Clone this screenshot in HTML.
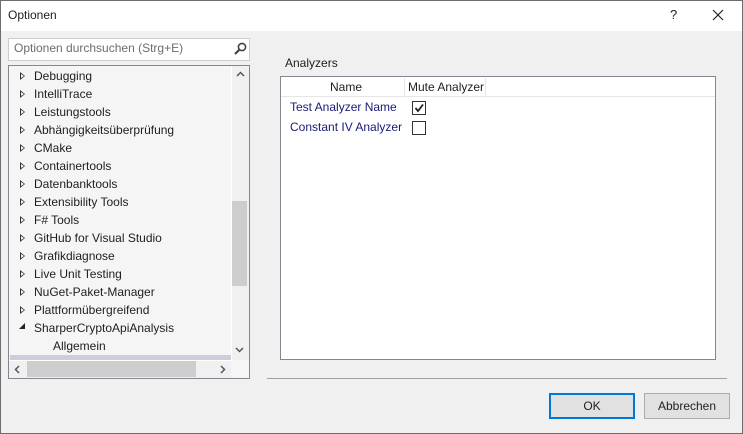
<!DOCTYPE html>
<html><head><style>
*{margin:0;padding:0;box-sizing:border-box}
body{width:743px;height:434px;overflow:hidden;font-family:"Segoe UI","Liberation Sans",sans-serif;font-size:12px;color:#1e1e1e;background:#f0f0f0;position:relative}
.a{position:absolute}
.win{left:0;top:0;width:743px;height:434px;border:1px solid #6d6d6d;background:#f0f0f0}
.title{left:1px;top:1px;width:741px;height:30px;background:#fff}
.item{position:absolute;left:34px;font-size:12px;line-height:18px;white-space:nowrap}
.tri{position:absolute;left:20px;width:0;height:0;border-top:4px solid transparent;border-bottom:4px solid transparent;border-left:5px solid #333}
.tri::after{content:"";position:absolute;left:-4px;top:-2px;border-top:2px solid transparent;border-bottom:2px solid transparent;border-left:3px solid #f5f5f5}
.btn{position:absolute;top:393px;width:86px;height:26px;background:#e1e1e1;border:1px solid #adadad;text-align:center;line-height:24px;font-size:12px}
.cb{position:absolute;left:412px;width:14px;height:14px;border:1px solid #333;background:#fff}
</style></head><body>
<div class="a win"></div>
<div class="a title"></div>
<div class="a" style="left:8px;top:8px;font-size:12px">Optionen</div>
<div class="a" style="left:670px;top:7px;font-size:13px">?</div>
<svg class="a" style="left:712px;top:9px" width="12" height="12"><path d="M1 1L11 11M11 1L1 11" stroke="#222" stroke-width="1.2"/></svg>

<div class="a" style="left:8px;top:38px;width:242px;height:23px;background:#fff;border:1px solid #ccc"></div>
<div class="a" style="left:14px;top:41px;color:#6d6d6d">Optionen durchsuchen (Strg+E)</div>
<svg class="a" style="left:233px;top:42px" width="14" height="14"><circle cx="9" cy="5" r="3.6" fill="none" stroke="#444" stroke-width="1.6"/><path d="M6.5 7.5L2 12" stroke="#444" stroke-width="2.2"/></svg>

<div class="a" style="left:8px;top:65px;width:242px;height:314px;background:#f5f5f5;border:1px solid #828790"></div>
<div class="a" style="left:231px;top:66px;width:18px;height:294px;background:#f0f0f0;border-left:1px solid #fff"></div>
<div class="a" style="left:232px;top:201px;width:15px;height:85px;background:#cdcdcd"></div>
<svg class="a" style="left:235px;top:347px" width="9" height="6"><path d="M1 1L4.5 4.5L8 1" fill="none" stroke="#555" stroke-width="1.5"/></svg>
<svg class="a" style="left:236px;top:71px" width="9" height="6"><path d="M1 5L4.5 1.5L8 5" fill="none" stroke="#555" stroke-width="1.5"/></svg>
<div class="a" style="left:9px;top:360px;width:222px;height:18px;background:#f0f0f0;border-top:1px solid #fff"></div>
<div class="a" style="left:27px;top:361px;width:169px;height:16px;background:#cdcdcd"></div>
<svg class="a" style="left:14px;top:365px" width="6" height="9"><path d="M5 1L1.5 4.5L5 8" fill="none" stroke="#555" stroke-width="1.5"/></svg>
<svg class="a" style="left:220px;top:365px" width="6" height="9"><path d="M1 1L4.5 4.5L1 8" fill="none" stroke="#555" stroke-width="1.5"/></svg>
<div class="a" style="left:10px;top:355px;width:221px;height:5px;background:#cccedb"></div>

<div class="tri" style="top:72px"></div><div class="item" style="top:67px">Debugging</div>
<div class="tri" style="top:90px"></div><div class="item" style="top:85px">IntelliTrace</div>
<div class="tri" style="top:108px"></div><div class="item" style="top:103px">Leistungstools</div>
<div class="tri" style="top:126px"></div><div class="item" style="top:121px">Abhängigkeitsüberprüfung</div>
<div class="tri" style="top:144px"></div><div class="item" style="top:139px">CMake</div>
<div class="tri" style="top:162px"></div><div class="item" style="top:157px">Containertools</div>
<div class="tri" style="top:180px"></div><div class="item" style="top:175px">Datenbanktools</div>
<div class="tri" style="top:198px"></div><div class="item" style="top:193px">Extensibility Tools</div>
<div class="tri" style="top:216px"></div><div class="item" style="top:211px">F# Tools</div>
<div class="tri" style="top:234px"></div><div class="item" style="top:229px">GitHub for Visual Studio</div>
<div class="tri" style="top:252px"></div><div class="item" style="top:247px">Grafikdiagnose</div>
<div class="tri" style="top:270px"></div><div class="item" style="top:265px">Live Unit Testing</div>
<div class="tri" style="top:288px"></div><div class="item" style="top:283px">NuGet-Paket-Manager</div>
<div class="tri" style="top:306px"></div><div class="item" style="top:301px">Plattformübergreifend</div>
<svg class="a" style="left:19px;top:323px" width="7" height="7"><path d="M6 0L6 6L0 6Z" fill="#222"/></svg>
<div class="item" style="top:319px">SharperCryptoApiAnalysis</div>
<div class="item" style="top:337px;left:53px">Allgemein</div>

<div class="a" style="left:285px;top:56px">Analyzers</div>
<div class="a" style="left:280px;top:76px;width:436px;height:284px;background:#fff;border:1px solid #828790"></div>
<div class="a" style="left:281px;top:96px;width:434px;height:1px;background:#e5e5e5"></div>
<div class="a" style="left:404px;top:78px;width:1px;height:18px;background:#e5e5e5"></div>
<div class="a" style="left:485px;top:78px;width:1px;height:18px;background:#e5e5e5"></div>
<div class="a" style="left:330px;top:80px">Name</div>
<div class="a" style="left:408px;top:80px">Mute Analyzer</div>
<div class="a" style="left:290px;top:100px;color:#1a1a7a">Test Analyzer Name</div>
<div class="a" style="left:290px;top:120px;color:#1a1a7a">Constant IV Analyzer</div>
<div class="cb" style="top:101px"></div>
<svg class="a" style="left:413px;top:102px" width="12" height="12"><path d="M2.5 6L5 9L10 2.5" fill="none" stroke="#222" stroke-width="1.8"/></svg>
<div class="cb" style="top:121px"></div>

<div class="a" style="left:267px;top:378px;width:460px;height:1px;background:#a0a0a0"></div>
<div class="btn" style="left:549px;border:2px solid #0078d7;line-height:22px">OK</div>
<div class="btn" style="left:644px">Abbrechen</div>
</body></html>
